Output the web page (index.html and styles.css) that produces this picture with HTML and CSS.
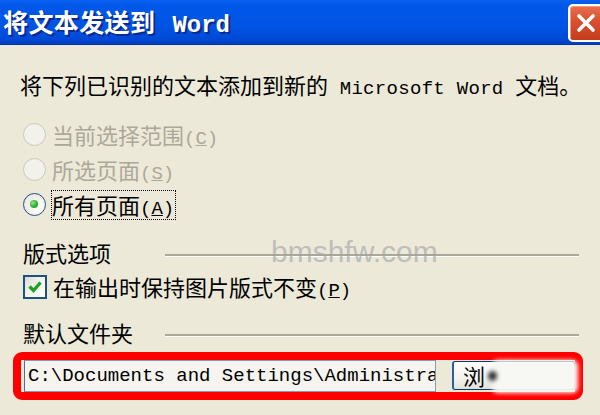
FILE: index.html
```html
<!DOCTYPE html>
<html lang="zh-CN">
<head>
    <meta charset="UTF-8">
    <title>将文本发送到 Word</title>
    <link rel="stylesheet" href="styles.css">
</head>
<body>
    <div id="dialog">
        <div class="titlebar">
            <span class="title">将文本发送到<span class="en">Word</span></span>
            <span class="close">
                <svg width="20" height="20" viewBox="0 0 20 20"><path d="M3 3 L17 17 M17 3 L3 17" stroke="#fff" stroke-width="3.6" stroke-linecap="round"/></svg>
            </span>
        </div>

        <div class="content">
            <p class="intro">将下列已识别的文本添加到新的<span class="en"> Microsoft Word </span>文档。</p>

            <ul class="options">
                <li class="disabled"><span class="radio"></span><span class="text">当前选择范围<span class="en">(<u>C</u>)</span></span></li>
                <li class="disabled"><span class="radio"></span><span class="text">所选页面<span class="en">(<u>S</u>)</span></span></li>
                <li><span class="radio checked"></span><span class="text focus">所有页面<span class="en">(<u>A</u>)</span></span></li>
            </ul>

            <div class="group">
                <span class="group-name">版式选项</span>
                <span class="rule"></span>
            </div>

            <div class="check-row">
                <span class="checkbox">
                    <svg width="18" height="18" viewBox="0 0 18 18"><path d="M3.5 8.5 L7.5 12.5 L14.5 4.5" fill="none" stroke="#21a121" stroke-width="3.4"/></svg>
                </span>
                <span class="text">在输出时保持图片版式不变<span class="en">(<u>P</u>)</span></span>
            </div>

            <div class="group">
                <span class="group-name">默认文件夹</span>
                <span class="rule"></span>
            </div>

            <div class="path-row">
                <div class="path">C:\Documents and Settings\Administrator\My Documents</div>
                <div class="browse">浏<span class="smudge"></span><span class="smudge-dot"></span></div>
            </div>

            <div class="watermark">bmshfw.com</div>
        </div>
    </div>
</body>
</html>
```

FILE: styles.css
```css
*{
    margin: 0;
    padding: 0;
    box-sizing: border-box;
}
body{
    background: #ECE9D8;
}
li{
    list-style: none;
}

#dialog{
    position: relative;
    width: 600px;
    height: 415px;
    overflow: hidden;
    background: #ECE9D8;
    font-family: "Noto Sans CJK SC", sans-serif;
    color: #000;
}

.en{
    font-family: "Liberation Mono", "Noto Sans CJK SC", monospace;
    font-size: 19px;
    line-height: 1;
}

/* title bar */
.titlebar{
    display: flex;
    align-items: center;
    justify-content: space-between;
    height: 45px;
    padding-left: 3px;
    background: linear-gradient(to bottom, #0a5fee 0, #0058e8 12%, #0054e3 60%, #0049d6 88%, #003fbf 100%);
    border-bottom: 1px solid #0831a5;
}
.title{
    color: #fff;
    font-size: 25px;
    font-weight: bold;
    line-height: 30px;
    text-shadow: 2px 2px 0 #0c2a8c;
    letter-spacing: 0.4px;
}
.title .en{
    margin-left: 17px;
    font-size: 24px;
    font-weight: bold;
    letter-spacing: 0;
}
.close{
    display: flex;
    align-items: center;
    justify-content: center;
    width: 36px;
    height: 38px;
    margin-right: -4px;
    margin-top: 1px;
    border: 2px solid #fff;
    border-radius: 5px;
    background: linear-gradient(to bottom, #e86f4f 0, #d8502f 45%, #c43c1c 100%);
    box-shadow: inset 1px 1px 0 #f39b7f;
}

/* content */
.content{
    padding-left: 20px;
}
.intro{
    margin-top: 27px;
    font-size: 22px;
    line-height: 24px;
    height: 24px;
}
.intro .en{
    letter-spacing: 0.3px;
}

.options{
    margin-top: 21px;
    padding-left: 3px;
}
.options li{
    display: flex;
    align-items: center;
    height: 35px;
    font-size: 22px;
    line-height: 26px;
}
.options .disabled{
    color: #ACA899;
}
.radio{
    width: 23px;
    height: 23px;
    margin-right: 6px;
    border-radius: 50%;
    border: 1.5px solid #1c5180;
    background: radial-gradient(circle at 65% 65%, #fff 0, #ecebe4 70%, #d6d3c6 100%);
    position: relative;
}
.disabled .radio{
    border-color: #cac8bb;
    background: #f2f1ea;
}
.radio.checked::after{
    content: "";
    position: absolute;
    left: 6px;
    top: 6px;
    width: 8px;
    height: 8px;
    border-radius: 50%;
    background: radial-gradient(circle at 35% 35%, #8fe48f 0, #2cb42c 55%, #158c15 100%);
}
.focus{
    outline: 1px dotted #000;
    outline-offset: 0;
    line-height: 26px;
    padding-right: 1px;
}

.group{
    display: flex;
    align-items: center;
    height: 35px;
    margin-top: 12px;
    padding-left: 3px;
    font-size: 22px;
    line-height: 26px;
}
.check-row + .group{
    margin-top: 10px;
}
.group-name{
    width: 142px;
}
.rule{
    width: 414px;
    margin-top: 8px;
    border-top: 2px solid #aca899;
    border-bottom: 1px solid #fff;
}

.check-row{
    display: flex;
    align-items: center;
    height: 35px;
    padding-left: 3px;
    font-size: 22px;
    line-height: 26px;
}
.checkbox{
    display: flex;
    align-items: center;
    justify-content: center;
    width: 24px;
    height: 24px;
    margin-right: 6px;
    border: 2px solid #1c5180;
    background: linear-gradient(135deg, #dcdbd3 0, #f4f3ee 50%, #fff 100%);
}

/* path field, circled in red */
.path-row{
    display: flex;
    align-items: flex-start;
    gap: 16px;
    width: 570px;
    height: 48px;
    margin: 3px 0 0 -7px;
    padding-left: 3px;
    border: 8px solid #ff0000;
    border-radius: 9px;
}
.path{
    width: 412px;
    height: 32px;
    overflow: hidden;
    white-space: nowrap;
    padding: 0 0 0 3px;
    border: 1px solid #7f9db9;
    border-left-color: #4a6fa5;
    background: #f5f4ef;
    font-family: "Liberation Mono", monospace;
    font-size: 19px;
    line-height: 30px;
}
.browse{
    position: relative;
    width: 123px;
    height: 29px;
    margin-top: 1px;
    padding-left: 9px;
    border: 1px solid #003c74;
    border-left: 2px solid #2c5e9e;
    border-radius: 3px;
    background: linear-gradient(to bottom, #fff 0, #f3f2ee 60%, #e3e1d6 100%);
    font-size: 22px;
    line-height: 27px;
}
/* blurred patch over the rest of the button label */
.smudge{
    position: absolute;
    left: 38px;
    top: -2px;
    width: 86px;
    height: 33px;
    border-radius: 6px;
    background: #f7f7f4;
    filter: blur(2px);
}
.smudge-dot{
    position: absolute;
    left: 34px;
    top: 9px;
    width: 9px;
    height: 10px;
    border-radius: 50%;
    background: #333;
    filter: blur(2px);
}

.watermark{
    position: absolute;
    left: 271px;
    top: 232px;
    font-family: "Liberation Sans", Arial, sans-serif;
    font-size: 30px;
    line-height: 40px;
    color: rgba(160, 160, 165, 0.6);
}
```
